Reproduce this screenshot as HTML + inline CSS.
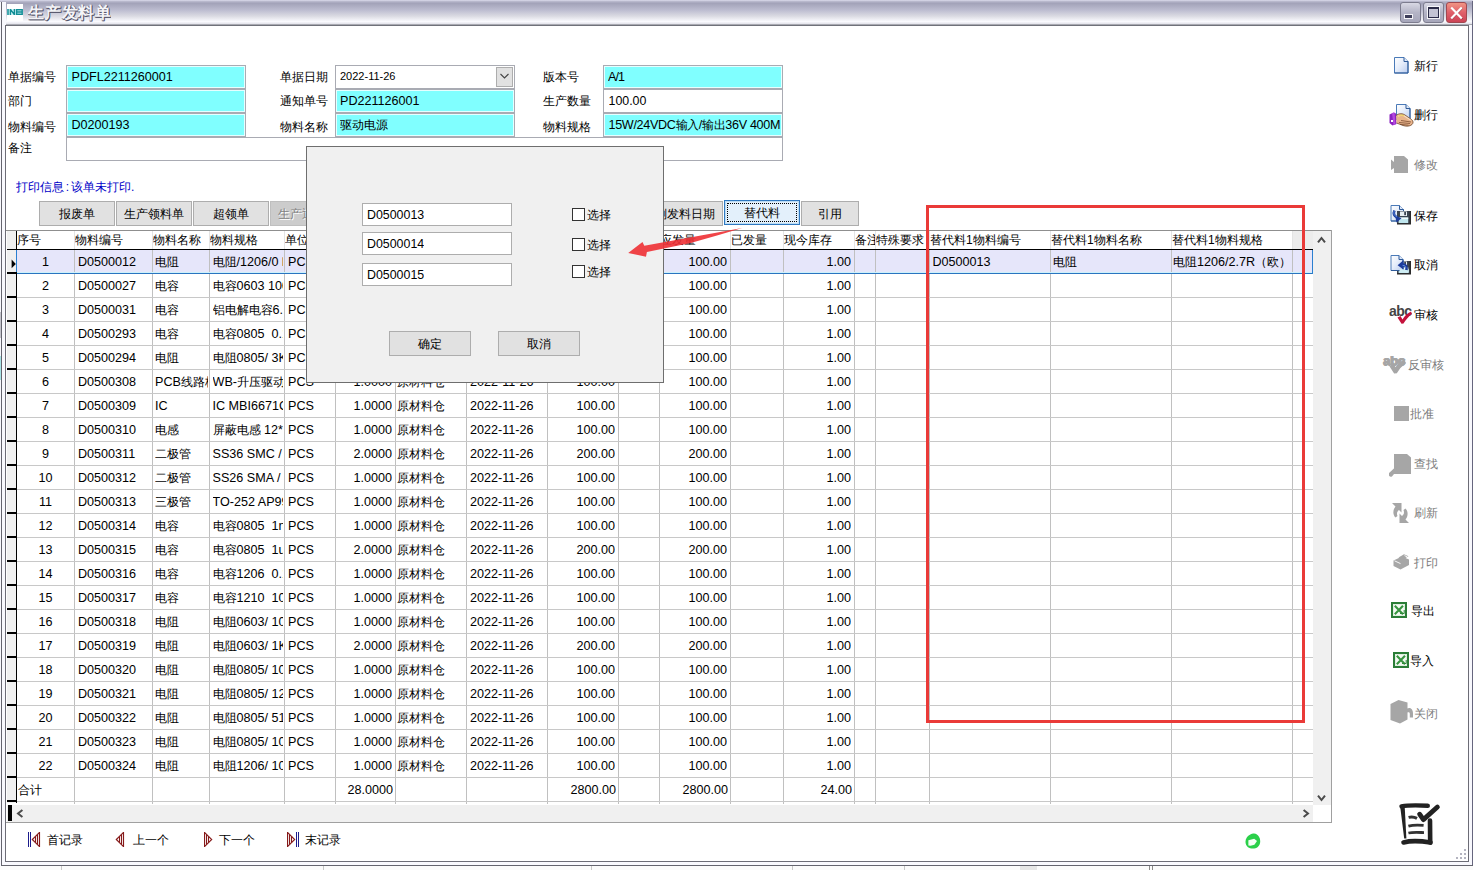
<!DOCTYPE html><html><head><meta charset="utf-8"><title>生产发料单</title><style>
*{box-sizing:border-box;margin:0;padding:0}
html,body{width:1473px;height:870px;overflow:hidden;background:#fff}
body{position:relative;font-family:"Liberation Sans",sans-serif;font-size:12.4px;color:#000;line-height:1}
.a{position:absolute}
.t{position:absolute;white-space:nowrap;overflow:hidden}
.lbl{position:absolute;font-size:12px;height:16px;line-height:16px;white-space:nowrap}
.fld{position:absolute;border:1px solid #a9abb3;background:#fff;height:25px;box-shadow:inset 0 0 0 1px #fff}
.fld.c{background:#80ffff;box-shadow:inset 0 0 0 1px #e6ffff}
.fld span{position:absolute;left:4.5px;top:0;height:22px;line-height:22px;white-space:nowrap;overflow:hidden;right:2px}
.btn{position:absolute;height:25px;top:201px;background:#e1e1e1;border:1px solid #adadad;text-align:center;font-size:12px;line-height:25px;white-space:nowrap;overflow:hidden}
.vl{position:absolute;width:1px;background:#c0c0c0;top:250px;height:554px}
.hl{position:absolute;height:1px;background:#c8c8c8;left:17px;width:1296px}
.tick{position:absolute;left:7px;width:10px;height:2px;background:#000}
.c{position:absolute;height:23px;line-height:25px;font-size:12.6px;white-space:pre;overflow:hidden}
.r{text-align:right}
.c i,.fld i{font-style:normal;font-size:12px}
b{display:inline-block;width:1em;text-align:center;font-weight:inherit}
.ti b{width:16.7px}
.pi b{width:12px}
.pi s{display:inline-block;width:7px;text-align:center;text-decoration:none}
.fld .nz b{width:11.67px}
.h{position:absolute;top:233px;height:15px;line-height:15px;font-size:12px;white-space:nowrap;overflow:hidden}
.tb{position:absolute;font-size:12px;height:16px;line-height:16px;white-space:nowrap}
.tb.d{color:#7d7d7d}
.nav{position:absolute;font-size:12px;top:832px;height:16px;line-height:16px;white-space:nowrap}
</style></head><body>
<div class="a" style="left:0;top:0;width:1473px;height:26px;background:linear-gradient(to bottom,#dddded 0px,#b8b8cc 1.5px,#a2a2b8 3.2px,#bcbcd0 10px,#dadae2 16px,#fafafe 21.5px,#e2e2ea 24px,#70727a 25px,#70727a 26px)"></div>
<div class="a" style="left:0;top:2px;width:6px;height:864px;background:#f8f8fd"></div>
<div class="a" style="left:1px;top:2px;width:1px;height:864px;background:#64646e"></div>
<div class="a" style="left:5px;top:25px;width:1px;height:837px;background:#6c6c76"></div>
<div class="a" style="left:1468px;top:25px;width:5px;height:841px;background:#f8f8fd"></div>
<div class="a" style="left:1468px;top:25px;width:1px;height:837px;background:#6c6c76"></div>
<div class="a" style="left:1472px;top:1px;width:1px;height:865px;background:#66667e"></div>
<div class="a" style="left:2px;top:861px;width:1470px;height:5px;background:#f8f8fd"></div>
<div class="a" style="left:5px;top:861px;width:1464px;height:1px;background:#6c6c76"></div>
<div class="a" style="left:1px;top:865px;width:1472px;height:1px;background:#64646e"></div>
<div class="a" style="left:0;top:866px;width:1473px;height:4px;background:#fbfbfb"></div>
<div class="a" style="left:61px;top:866px;width:1px;height:4px;background:#c8c8c8"></div>
<div class="a" style="left:591px;top:866px;width:1px;height:4px;background:#c8c8c8"></div>
<div class="a" style="left:792px;top:866px;width:1px;height:4px;background:#c8c8c8"></div>
<div class="a" style="left:904px;top:866px;width:1px;height:4px;background:#c8c8c8"></div>
<div class="a" style="left:1020px;top:866px;width:17px;height:4px;background:#e6e6e6"></div>
<div class="a" style="left:323px;top:866px;width:1px;height:4px;background:#c8c8c8"></div>
<div class="a" style="left:1149px;top:866px;width:1px;height:4px;background:#8a8a8a"></div><div class="a" style="left:1152px;top:866px;width:1px;height:4px;background:#8a8a8a"></div>
<div class="a" style="left:0;top:356px;width:1px;height:24px;background:#a8e4e6"></div>
<div class="a" style="left:0;top:312px;width:1px;height:26px;background:#c4c4cc"></div>
<div class="a" style="left:7px;top:4px;width:16px;height:17px;background:#fff"></div>
<svg class="a" style="left:7px;top:9px" width="16" height="6" viewBox="0 0 16 6"><rect x="0" y="0" width="16" height="6" fill="#d4f7f8"/><path d="M1 0v6M3.4 0v6M3.4 0.4L7.4 5.6M7.4 0v6" stroke="#128e96" stroke-width="1.5" fill="none"/><path d="M9.6 0.7h5.6v4.6h-5.6zM9.6 3h5.6" stroke="#128e96" stroke-width="1.4" fill="none"/></svg>
<div class="t ti" style="left:28px;top:3px;height:20px;line-height:20px;font-size:16px;font-weight:bold;color:#f4f4f8;text-shadow:1px 1px 0 #55556a,0 1px 0 #666678,1px 0 0 #77778a"><b>生</b><b>产</b><b>发</b><b>料</b><b>单</b></div>
<div class="a" style="left:1400px;top:2px;width:21px;height:21px;border:1px solid #7c7c8e;border-radius:3px;background:linear-gradient(#d8d8e4,#b4b4c6 50%,#a6a6ba)"></div>
<div class="a" style="left:1405px;top:15px;width:7px;height:3px;background:#3c3c58;box-shadow:0 0 0 1px rgba(255,255,255,.85)"></div>
<div class="a" style="left:1423px;top:2px;width:21px;height:21px;border:1px solid #7c7c8e;border-radius:3px;background:linear-gradient(#d8d8e4,#b4b4c6 50%,#a6a6ba)"></div>
<div class="a" style="left:1428px;top:7px;width:11px;height:11px;border:1px solid #2c2c48;border-top-width:2px;background:#c4c4d4;box-shadow:0 0 0 1px rgba(255,255,255,.85)"></div>
<div class="a" style="left:1446px;top:2px;width:21px;height:21px;border:1px solid #a04850;border-radius:3px;background:linear-gradient(#f09484,#e0606a 50%,#cc4456)"></div>
<svg class="a" style="left:1446px;top:3px" width="21" height="20" viewBox="0 0 21 20"><path d="M5.6 5L16.4 16M16.4 5L5.6 16" stroke="#5a1c24" stroke-width="1.6" fill="none" opacity="0.6"/><path d="M5.2 4.5L15.8 15.5M15.8 4.5L5.2 15.5" stroke="#fff" stroke-width="2.2" fill="none"/></svg>
<div class="lbl" style="left:8px;top:69px"><b>单</b><b>据</b><b>编</b><b>号</b></div>
<div class="lbl" style="left:8px;top:93px"><b>部</b><b>门</b></div>
<div class="lbl" style="left:8px;top:119px"><b>物</b><b>料</b><b>编</b><b>号</b></div>
<div class="lbl" style="left:8px;top:140px"><b>备</b><b>注</b></div>
<div class="lbl" style="left:280px;top:69px"><b>单</b><b>据</b><b>日</b><b>期</b></div>
<div class="lbl" style="left:280px;top:93px"><b>通</b><b>知</b><b>单</b><b>号</b></div>
<div class="lbl" style="left:280px;top:119px"><b>物</b><b>料</b><b>名</b><b>称</b></div>
<div class="lbl" style="left:543px;top:69px"><b>版</b><b>本</b><b>号</b></div>
<div class="lbl" style="left:543px;top:93px"><b>生</b><b>产</b><b>数</b><b>量</b></div>
<div class="lbl" style="left:543px;top:119px"><b>物</b><b>料</b><b>规</b><b>格</b></div>
<div class="fld" style="left:66px;top:137px;width:717px;height:24px"><span></span></div>
<div class="fld c" style="left:66px;top:65px;width:180px;height:24px"><span>PDFL2211260001</span></div>
<div class="fld c" style="left:66px;top:89px;width:180px;height:24px"><span></span></div>
<div class="fld c" style="left:66px;top:113px;width:180px;height:24px"><span>D0200193</span></div>
<div class="fld" style="left:335px;top:65px;width:180px;height:24px"><span style="font-size:11px;left:4px;top:-1px">2022-11-26</span></div>
<div class="fld c" style="left:335px;top:89px;width:180px;height:24px"><span style="left:4px">PD221126001</span></div>
<div class="fld c" style="left:335px;top:113px;width:180px;height:24px"><span style="left:4px"><i><b>驱</b><b>动</b><b>电</b><b>源</b></i></span></div>
<div class="fld c" style="left:603px;top:65px;width:180px;height:24px"><span style="left:4px;letter-spacing:-1px">A/1</span></div>
<div class="fld" style="left:603px;top:89px;width:180px;height:24px"><span>100.00</span></div>
<div class="fld c" style="left:603px;top:113px;width:180px;height:24px"><span style="letter-spacing:-0.33px;right:0">15W/24VDC<i class="nz"><b>输</b><b>入</b></i>/<i class="nz"><b>输</b><b>出</b></i>36V 400M</span></div>
<div class="a" style="left:496px;top:67px;width:17px;height:20px;background:#e1e1e1;border:1px solid #adadad"></div>
<svg class="a" style="left:499px;top:72px" width="11" height="8" viewBox="0 0 11 8"><path d="M1.5 2L5.5 6L9.5 2" stroke="#444" stroke-width="1.1" fill="none"/></svg>
<div class="t pi" style="left:16px;top:179px;height:16px;line-height:16px;font-size:12px;color:#0000c8"><b>打</b><b>印</b><b>信</b><b>息</b><s>:</s><b>该</b><b>单</b><b>未</b><b>打</b><b>印</b><s style="width:6px;text-align:left">.</s></div>
<div class="btn" style="left:39px;width:76px;"><b>报</b><b>废</b><b>单</b></div>
<div class="btn" style="left:116px;width:76px;"><b>生</b><b>产</b><b>领</b><b>料</b><b>单</b></div>
<div class="btn" style="left:193px;width:76px;"><b>超</b><b>领</b><b>单</b></div>
<div class="btn" style="left:270px;width:76px;color:#838383;background:#cccccc;border-color:#bfbfbf;text-shadow:1px 1px 0 #fff"><b>生</b><b>产</b><b>退</b><b>料</b><b>单</b></div>
<div class="btn" style="left:647px;width:76px;"><b>倒</b><b>发</b><b>料</b><b>日</b><b>期</b></div>
<div class="btn" style="left:724px;width:76px;background:#e3f0fb;border-color:#2f78c0;top:200px;height:25px;line-height:25px;box-shadow:inset 0 0 0 1px #bcdcf4"><b>替</b><b>代</b><b>料</b></div>
<div class="a" style="left:727px;top:203px;width:70px;height:19px;border:1px dotted #000"></div>
<div class="btn" style="left:801px;width:58px;"><b>引</b><b>用</b></div>
<div class="a" style="left:6px;top:230px;width:1326px;height:1px;background:#8f8f8f"></div>
<div class="a" style="left:1331px;top:230px;width:1px;height:593px;background:#a0a0a0"></div>
<div class="a" style="left:6px;top:822px;width:1326px;height:1px;background:#a0a0a0"></div>
<div class="a" style="left:7px;top:231px;width:10px;height:572px;background:#f0f0f0"></div>
<div class="a" style="left:16px;top:231px;width:1px;height:572px;background:#000"></div>
<div class="a" style="left:1293px;top:231px;width:20px;height:18px;background:#ececec"></div>
<div class="a" style="left:17px;top:250px;width:1296px;height:23px;background:#e6e6fa"></div>
<div class="vl" style="left:74px"></div>
<div class="a" style="left:74px;top:231px;width:1px;height:18px;background:#e4e4e4"></div>
<div class="vl" style="left:152px"></div>
<div class="a" style="left:152px;top:231px;width:1px;height:18px;background:#e4e4e4"></div>
<div class="vl" style="left:209px"></div>
<div class="a" style="left:209px;top:231px;width:1px;height:18px;background:#e4e4e4"></div>
<div class="vl" style="left:284px"></div>
<div class="a" style="left:284px;top:231px;width:1px;height:18px;background:#e4e4e4"></div>
<div class="vl" style="left:335px"></div>
<div class="a" style="left:335px;top:231px;width:1px;height:18px;background:#e4e4e4"></div>
<div class="vl" style="left:395px"></div>
<div class="a" style="left:395px;top:231px;width:1px;height:18px;background:#e4e4e4"></div>
<div class="vl" style="left:466px"></div>
<div class="a" style="left:466px;top:231px;width:1px;height:18px;background:#e4e4e4"></div>
<div class="vl" style="left:547px"></div>
<div class="a" style="left:547px;top:231px;width:1px;height:18px;background:#e4e4e4"></div>
<div class="vl" style="left:618px"></div>
<div class="a" style="left:618px;top:231px;width:1px;height:18px;background:#e4e4e4"></div>
<div class="vl" style="left:659px"></div>
<div class="a" style="left:659px;top:231px;width:1px;height:18px;background:#e4e4e4"></div>
<div class="vl" style="left:730px"></div>
<div class="a" style="left:730px;top:231px;width:1px;height:18px;background:#e4e4e4"></div>
<div class="vl" style="left:783px"></div>
<div class="a" style="left:783px;top:231px;width:1px;height:18px;background:#e4e4e4"></div>
<div class="vl" style="left:854px"></div>
<div class="a" style="left:854px;top:231px;width:1px;height:18px;background:#e4e4e4"></div>
<div class="vl" style="left:875px"></div>
<div class="a" style="left:875px;top:231px;width:1px;height:18px;background:#e4e4e4"></div>
<div class="vl" style="left:929px"></div>
<div class="a" style="left:929px;top:231px;width:1px;height:18px;background:#e4e4e4"></div>
<div class="vl" style="left:1050px"></div>
<div class="a" style="left:1050px;top:231px;width:1px;height:18px;background:#e4e4e4"></div>
<div class="vl" style="left:1171px"></div>
<div class="a" style="left:1171px;top:231px;width:1px;height:18px;background:#e4e4e4"></div>
<div class="vl" style="left:1292px"></div>
<div class="a" style="left:1292px;top:231px;width:1px;height:18px;background:#e4e4e4"></div>
<div class="hl" style="top:273px"></div>
<div class="hl" style="top:297px"></div>
<div class="hl" style="top:321px"></div>
<div class="hl" style="top:345px"></div>
<div class="hl" style="top:369px"></div>
<div class="hl" style="top:393px"></div>
<div class="hl" style="top:417px"></div>
<div class="hl" style="top:441px"></div>
<div class="hl" style="top:465px"></div>
<div class="hl" style="top:489px"></div>
<div class="hl" style="top:513px"></div>
<div class="hl" style="top:537px"></div>
<div class="hl" style="top:561px"></div>
<div class="hl" style="top:585px"></div>
<div class="hl" style="top:609px"></div>
<div class="hl" style="top:633px"></div>
<div class="hl" style="top:657px"></div>
<div class="hl" style="top:681px"></div>
<div class="hl" style="top:705px"></div>
<div class="hl" style="top:729px"></div>
<div class="hl" style="top:753px"></div>
<div class="hl" style="top:777px"></div>
<div class="hl" style="top:801px"></div>
<div class="a" style="left:7px;top:249px;width:1306px;height:1px;background:#000"></div>
<div class="a" style="left:17px;top:272px;width:1296px;height:1px;background:#cdf1fb"></div>
<div class="a" style="left:17px;top:273px;width:1296px;height:1px;background:#2a74c0"></div>
<div class="a" style="left:1312px;top:250px;width:1px;height:24px;background:#2a7fd0"></div>
<div class="a" style="left:16px;top:250px;width:1px;height:24px;background:#2a7fd0"></div>
<div class="tick" style="top:272px"></div>
<div class="tick" style="top:296px"></div>
<div class="tick" style="top:320px"></div>
<div class="tick" style="top:344px"></div>
<div class="tick" style="top:368px"></div>
<div class="tick" style="top:392px"></div>
<div class="tick" style="top:416px"></div>
<div class="tick" style="top:440px"></div>
<div class="tick" style="top:464px"></div>
<div class="tick" style="top:488px"></div>
<div class="tick" style="top:512px"></div>
<div class="tick" style="top:536px"></div>
<div class="tick" style="top:560px"></div>
<div class="tick" style="top:584px"></div>
<div class="tick" style="top:608px"></div>
<div class="tick" style="top:632px"></div>
<div class="tick" style="top:656px"></div>
<div class="tick" style="top:680px"></div>
<div class="tick" style="top:704px"></div>
<div class="tick" style="top:728px"></div>
<div class="tick" style="top:752px"></div>
<div class="tick" style="top:776px"></div>
<div class="tick" style="top:800px"></div>
<svg class="a" style="left:11px;top:259px" width="5" height="10" viewBox="0 0 5 10"><path d="M0.6 0.6L4.8 4.9L0.6 9.2z" fill="#000"/></svg>
<div class="h" style="left:17px;width:57px"><b>序</b><b>号</b></div>
<div class="h" style="left:75px;width:77px"><b>物</b><b>料</b><b>编</b><b>号</b></div>
<div class="h" style="left:153px;width:56px"><b>物</b><b>料</b><b>名</b><b>称</b></div>
<div class="h" style="left:210px;width:74px"><b>物</b><b>料</b><b>规</b><b>格</b></div>
<div class="h" style="left:285px;width:50px"><b>单</b><b>位</b></div>
<div class="h" style="left:660px;width:70px"><b>应</b><b>发</b><b>量</b></div>
<div class="h" style="left:731px;width:52px"><b>已</b><b>发</b><b>量</b></div>
<div class="h" style="left:784px;width:70px"><b>现</b><b>今</b><b>库</b><b>存</b></div>
<div class="h" style="left:855px;width:20px"><b>备</b><b>注</b></div>
<div class="h" style="left:876px;width:53px"><b>特</b><b>殊</b><b>要</b><b>求</b></div>
<div class="h" style="left:930px;width:120px"><b>替</b><b>代</b><b>料</b>1<b>物</b><b>料</b><b>编</b><b>号</b></div>
<div class="h" style="left:1051px;width:120px"><b>替</b><b>代</b><b>料</b>1<b>物</b><b>料</b><b>名</b><b>称</b></div>
<div class="h" style="left:1172px;width:120px"><b>替</b><b>代</b><b>料</b>1<b>物</b><b>料</b><b>规</b><b>格</b></div>
<div class="c" style="left:17px;top:250px;width:57px;text-align:center">1</div>
<div class="c" style="left:78px;top:250px;width:73px">D0500012</div>
<div class="c" style="left:155px;top:250px;width:53px"><i><b>电</b><b>阻</b></i></div>
<div class="c" style="left:212.5px;top:250px;width:70.5px"><i><b>电</b><b>阻</b></i>/1206/0 <i><b>欧</b></i></div>
<div class="c" style="left:288px;top:250px;width:46px">PCS</div>
<div class="c r" style="left:336px;top:250px;width:56px">1.0000</div>
<div class="c" style="left:397px;top:250px;width:68px"><i><b>原</b><b>材</b><b>料</b><b>仓</b></i></div>
<div class="c" style="left:470px;top:250px;width:76px">2022-11-26</div>
<div class="c r" style="left:548px;top:250px;width:67px">100.00</div>
<div class="c r" style="left:660px;top:250px;width:67px">100.00</div>
<div class="c r" style="left:784px;top:250px;width:67px">1.00</div>
<div class="c" style="left:17px;top:274px;width:57px;text-align:center">2</div>
<div class="c" style="left:78px;top:274px;width:73px">D0500027</div>
<div class="c" style="left:155px;top:274px;width:53px"><i><b>电</b><b>容</b></i></div>
<div class="c" style="left:212.5px;top:274px;width:70.5px"><i><b>电</b><b>容</b></i>0603 10000</div>
<div class="c" style="left:288px;top:274px;width:46px">PCS</div>
<div class="c r" style="left:336px;top:274px;width:56px">1.0000</div>
<div class="c" style="left:397px;top:274px;width:68px"><i><b>原</b><b>材</b><b>料</b><b>仓</b></i></div>
<div class="c" style="left:470px;top:274px;width:76px">2022-11-26</div>
<div class="c r" style="left:548px;top:274px;width:67px">100.00</div>
<div class="c r" style="left:660px;top:274px;width:67px">100.00</div>
<div class="c r" style="left:784px;top:274px;width:67px">1.00</div>
<div class="c" style="left:17px;top:298px;width:57px;text-align:center">3</div>
<div class="c" style="left:78px;top:298px;width:73px">D0500031</div>
<div class="c" style="left:155px;top:298px;width:53px"><i><b>电</b><b>容</b></i></div>
<div class="c" style="left:212.5px;top:298px;width:70.5px"><i><b>铝</b><b>电</b><b>解</b><b>电</b><b>容</b></i>6.3</div>
<div class="c" style="left:288px;top:298px;width:46px">PCS</div>
<div class="c r" style="left:336px;top:298px;width:56px">1.0000</div>
<div class="c" style="left:397px;top:298px;width:68px"><i><b>原</b><b>材</b><b>料</b><b>仓</b></i></div>
<div class="c" style="left:470px;top:298px;width:76px">2022-11-26</div>
<div class="c r" style="left:548px;top:298px;width:67px">100.00</div>
<div class="c r" style="left:660px;top:298px;width:67px">100.00</div>
<div class="c r" style="left:784px;top:298px;width:67px">1.00</div>
<div class="c" style="left:17px;top:322px;width:57px;text-align:center">4</div>
<div class="c" style="left:78px;top:322px;width:73px">D0500293</div>
<div class="c" style="left:155px;top:322px;width:53px"><i><b>电</b><b>容</b></i></div>
<div class="c" style="left:212.5px;top:322px;width:70.5px"><i><b>电</b><b>容</b></i>0805  0.1u</div>
<div class="c" style="left:288px;top:322px;width:46px">PCS</div>
<div class="c r" style="left:336px;top:322px;width:56px">1.0000</div>
<div class="c" style="left:397px;top:322px;width:68px"><i><b>原</b><b>材</b><b>料</b><b>仓</b></i></div>
<div class="c" style="left:470px;top:322px;width:76px">2022-11-26</div>
<div class="c r" style="left:548px;top:322px;width:67px">100.00</div>
<div class="c r" style="left:660px;top:322px;width:67px">100.00</div>
<div class="c r" style="left:784px;top:322px;width:67px">1.00</div>
<div class="c" style="left:17px;top:346px;width:57px;text-align:center">5</div>
<div class="c" style="left:78px;top:346px;width:73px">D0500294</div>
<div class="c" style="left:155px;top:346px;width:53px"><i><b>电</b><b>阻</b></i></div>
<div class="c" style="left:212.5px;top:346px;width:70.5px"><i><b>电</b><b>阻</b></i>0805/ 3K</div>
<div class="c" style="left:288px;top:346px;width:46px">PCS</div>
<div class="c r" style="left:336px;top:346px;width:56px">1.0000</div>
<div class="c" style="left:397px;top:346px;width:68px"><i><b>原</b><b>材</b><b>料</b><b>仓</b></i></div>
<div class="c" style="left:470px;top:346px;width:76px">2022-11-26</div>
<div class="c r" style="left:548px;top:346px;width:67px">100.00</div>
<div class="c r" style="left:660px;top:346px;width:67px">100.00</div>
<div class="c r" style="left:784px;top:346px;width:67px">1.00</div>
<div class="c" style="left:17px;top:370px;width:57px;text-align:center">6</div>
<div class="c" style="left:78px;top:370px;width:73px">D0500308</div>
<div class="c" style="left:155px;top:370px;width:53px">PCB<i><b>线</b><b>路</b><b>板</b></i></div>
<div class="c" style="left:212.5px;top:370px;width:70.5px">WB-<i><b>升</b><b>压</b><b>驱</b><b>动</b><b>板</b></i></div>
<div class="c" style="left:288px;top:370px;width:46px">PCS</div>
<div class="c r" style="left:336px;top:370px;width:56px">1.0000</div>
<div class="c" style="left:397px;top:370px;width:68px"><i><b>原</b><b>材</b><b>料</b><b>仓</b></i></div>
<div class="c" style="left:470px;top:370px;width:76px">2022-11-26</div>
<div class="c r" style="left:548px;top:370px;width:67px">100.00</div>
<div class="c r" style="left:660px;top:370px;width:67px">100.00</div>
<div class="c r" style="left:784px;top:370px;width:67px">1.00</div>
<div class="c" style="left:17px;top:394px;width:57px;text-align:center">7</div>
<div class="c" style="left:78px;top:394px;width:73px">D0500309</div>
<div class="c" style="left:155px;top:394px;width:53px">IC</div>
<div class="c" style="left:212.5px;top:394px;width:70.5px">IC MBI6671GS</div>
<div class="c" style="left:288px;top:394px;width:46px">PCS</div>
<div class="c r" style="left:336px;top:394px;width:56px">1.0000</div>
<div class="c" style="left:397px;top:394px;width:68px"><i><b>原</b><b>材</b><b>料</b><b>仓</b></i></div>
<div class="c" style="left:470px;top:394px;width:76px">2022-11-26</div>
<div class="c r" style="left:548px;top:394px;width:67px">100.00</div>
<div class="c r" style="left:660px;top:394px;width:67px">100.00</div>
<div class="c r" style="left:784px;top:394px;width:67px">1.00</div>
<div class="c" style="left:17px;top:418px;width:57px;text-align:center">8</div>
<div class="c" style="left:78px;top:418px;width:73px">D0500310</div>
<div class="c" style="left:155px;top:418px;width:53px"><i><b>电</b><b>感</b></i></div>
<div class="c" style="left:212.5px;top:418px;width:70.5px"><i><b>屏</b><b>蔽</b><b>电</b><b>感</b></i> 12*1</div>
<div class="c" style="left:288px;top:418px;width:46px">PCS</div>
<div class="c r" style="left:336px;top:418px;width:56px">1.0000</div>
<div class="c" style="left:397px;top:418px;width:68px"><i><b>原</b><b>材</b><b>料</b><b>仓</b></i></div>
<div class="c" style="left:470px;top:418px;width:76px">2022-11-26</div>
<div class="c r" style="left:548px;top:418px;width:67px">100.00</div>
<div class="c r" style="left:660px;top:418px;width:67px">100.00</div>
<div class="c r" style="left:784px;top:418px;width:67px">1.00</div>
<div class="c" style="left:17px;top:442px;width:57px;text-align:center">9</div>
<div class="c" style="left:78px;top:442px;width:73px">D0500311</div>
<div class="c" style="left:155px;top:442px;width:53px"><i><b>二</b><b>极</b><b>管</b></i></div>
<div class="c" style="left:212.5px;top:442px;width:70.5px">SS36 SMC / 3A</div>
<div class="c" style="left:288px;top:442px;width:46px">PCS</div>
<div class="c r" style="left:336px;top:442px;width:56px">2.0000</div>
<div class="c" style="left:397px;top:442px;width:68px"><i><b>原</b><b>材</b><b>料</b><b>仓</b></i></div>
<div class="c" style="left:470px;top:442px;width:76px">2022-11-26</div>
<div class="c r" style="left:548px;top:442px;width:67px">200.00</div>
<div class="c r" style="left:660px;top:442px;width:67px">200.00</div>
<div class="c r" style="left:784px;top:442px;width:67px">1.00</div>
<div class="c" style="left:17px;top:466px;width:57px;text-align:center">10</div>
<div class="c" style="left:78px;top:466px;width:73px">D0500312</div>
<div class="c" style="left:155px;top:466px;width:53px"><i><b>二</b><b>极</b><b>管</b></i></div>
<div class="c" style="left:212.5px;top:466px;width:70.5px">SS26 SMA / 2A</div>
<div class="c" style="left:288px;top:466px;width:46px">PCS</div>
<div class="c r" style="left:336px;top:466px;width:56px">1.0000</div>
<div class="c" style="left:397px;top:466px;width:68px"><i><b>原</b><b>材</b><b>料</b><b>仓</b></i></div>
<div class="c" style="left:470px;top:466px;width:76px">2022-11-26</div>
<div class="c r" style="left:548px;top:466px;width:67px">100.00</div>
<div class="c r" style="left:660px;top:466px;width:67px">100.00</div>
<div class="c r" style="left:784px;top:466px;width:67px">1.00</div>
<div class="c" style="left:17px;top:490px;width:57px;text-align:center">11</div>
<div class="c" style="left:78px;top:490px;width:73px">D0500313</div>
<div class="c" style="left:155px;top:490px;width:53px"><i><b>三</b><b>极</b><b>管</b></i></div>
<div class="c" style="left:212.5px;top:490px;width:70.5px">TO-252 AP9997</div>
<div class="c" style="left:288px;top:490px;width:46px">PCS</div>
<div class="c r" style="left:336px;top:490px;width:56px">1.0000</div>
<div class="c" style="left:397px;top:490px;width:68px"><i><b>原</b><b>材</b><b>料</b><b>仓</b></i></div>
<div class="c" style="left:470px;top:490px;width:76px">2022-11-26</div>
<div class="c r" style="left:548px;top:490px;width:67px">100.00</div>
<div class="c r" style="left:660px;top:490px;width:67px">100.00</div>
<div class="c r" style="left:784px;top:490px;width:67px">1.00</div>
<div class="c" style="left:17px;top:514px;width:57px;text-align:center">12</div>
<div class="c" style="left:78px;top:514px;width:73px">D0500314</div>
<div class="c" style="left:155px;top:514px;width:53px"><i><b>电</b><b>容</b></i></div>
<div class="c" style="left:212.5px;top:514px;width:70.5px"><i><b>电</b><b>容</b></i>0805  1nF</div>
<div class="c" style="left:288px;top:514px;width:46px">PCS</div>
<div class="c r" style="left:336px;top:514px;width:56px">1.0000</div>
<div class="c" style="left:397px;top:514px;width:68px"><i><b>原</b><b>材</b><b>料</b><b>仓</b></i></div>
<div class="c" style="left:470px;top:514px;width:76px">2022-11-26</div>
<div class="c r" style="left:548px;top:514px;width:67px">100.00</div>
<div class="c r" style="left:660px;top:514px;width:67px">100.00</div>
<div class="c r" style="left:784px;top:514px;width:67px">1.00</div>
<div class="c" style="left:17px;top:538px;width:57px;text-align:center">13</div>
<div class="c" style="left:78px;top:538px;width:73px">D0500315</div>
<div class="c" style="left:155px;top:538px;width:53px"><i><b>电</b><b>容</b></i></div>
<div class="c" style="left:212.5px;top:538px;width:70.5px"><i><b>电</b><b>容</b></i>0805  1uF</div>
<div class="c" style="left:288px;top:538px;width:46px">PCS</div>
<div class="c r" style="left:336px;top:538px;width:56px">2.0000</div>
<div class="c" style="left:397px;top:538px;width:68px"><i><b>原</b><b>材</b><b>料</b><b>仓</b></i></div>
<div class="c" style="left:470px;top:538px;width:76px">2022-11-26</div>
<div class="c r" style="left:548px;top:538px;width:67px">200.00</div>
<div class="c r" style="left:660px;top:538px;width:67px">200.00</div>
<div class="c r" style="left:784px;top:538px;width:67px">1.00</div>
<div class="c" style="left:17px;top:562px;width:57px;text-align:center">14</div>
<div class="c" style="left:78px;top:562px;width:73px">D0500316</div>
<div class="c" style="left:155px;top:562px;width:53px"><i><b>电</b><b>容</b></i></div>
<div class="c" style="left:212.5px;top:562px;width:70.5px"><i><b>电</b><b>容</b></i>1206  0.1u</div>
<div class="c" style="left:288px;top:562px;width:46px">PCS</div>
<div class="c r" style="left:336px;top:562px;width:56px">1.0000</div>
<div class="c" style="left:397px;top:562px;width:68px"><i><b>原</b><b>材</b><b>料</b><b>仓</b></i></div>
<div class="c" style="left:470px;top:562px;width:76px">2022-11-26</div>
<div class="c r" style="left:548px;top:562px;width:67px">100.00</div>
<div class="c r" style="left:660px;top:562px;width:67px">100.00</div>
<div class="c r" style="left:784px;top:562px;width:67px">1.00</div>
<div class="c" style="left:17px;top:586px;width:57px;text-align:center">15</div>
<div class="c" style="left:78px;top:586px;width:73px">D0500317</div>
<div class="c" style="left:155px;top:586px;width:53px"><i><b>电</b><b>容</b></i></div>
<div class="c" style="left:212.5px;top:586px;width:70.5px"><i><b>电</b><b>容</b></i>1210  10uF</div>
<div class="c" style="left:288px;top:586px;width:46px">PCS</div>
<div class="c r" style="left:336px;top:586px;width:56px">1.0000</div>
<div class="c" style="left:397px;top:586px;width:68px"><i><b>原</b><b>材</b><b>料</b><b>仓</b></i></div>
<div class="c" style="left:470px;top:586px;width:76px">2022-11-26</div>
<div class="c r" style="left:548px;top:586px;width:67px">100.00</div>
<div class="c r" style="left:660px;top:586px;width:67px">100.00</div>
<div class="c r" style="left:784px;top:586px;width:67px">1.00</div>
<div class="c" style="left:17px;top:610px;width:57px;text-align:center">16</div>
<div class="c" style="left:78px;top:610px;width:73px">D0500318</div>
<div class="c" style="left:155px;top:610px;width:53px"><i><b>电</b><b>阻</b></i></div>
<div class="c" style="left:212.5px;top:610px;width:70.5px"><i><b>电</b><b>阻</b></i>0603/ 10K</div>
<div class="c" style="left:288px;top:610px;width:46px">PCS</div>
<div class="c r" style="left:336px;top:610px;width:56px">1.0000</div>
<div class="c" style="left:397px;top:610px;width:68px"><i><b>原</b><b>材</b><b>料</b><b>仓</b></i></div>
<div class="c" style="left:470px;top:610px;width:76px">2022-11-26</div>
<div class="c r" style="left:548px;top:610px;width:67px">100.00</div>
<div class="c r" style="left:660px;top:610px;width:67px">100.00</div>
<div class="c r" style="left:784px;top:610px;width:67px">1.00</div>
<div class="c" style="left:17px;top:634px;width:57px;text-align:center">17</div>
<div class="c" style="left:78px;top:634px;width:73px">D0500319</div>
<div class="c" style="left:155px;top:634px;width:53px"><i><b>电</b><b>阻</b></i></div>
<div class="c" style="left:212.5px;top:634px;width:70.5px"><i><b>电</b><b>阻</b></i>0603/ 1K</div>
<div class="c" style="left:288px;top:634px;width:46px">PCS</div>
<div class="c r" style="left:336px;top:634px;width:56px">2.0000</div>
<div class="c" style="left:397px;top:634px;width:68px"><i><b>原</b><b>材</b><b>料</b><b>仓</b></i></div>
<div class="c" style="left:470px;top:634px;width:76px">2022-11-26</div>
<div class="c r" style="left:548px;top:634px;width:67px">200.00</div>
<div class="c r" style="left:660px;top:634px;width:67px">200.00</div>
<div class="c r" style="left:784px;top:634px;width:67px">1.00</div>
<div class="c" style="left:17px;top:658px;width:57px;text-align:center">18</div>
<div class="c" style="left:78px;top:658px;width:73px">D0500320</div>
<div class="c" style="left:155px;top:658px;width:53px"><i><b>电</b><b>阻</b></i></div>
<div class="c" style="left:212.5px;top:658px;width:70.5px"><i><b>电</b><b>阻</b></i>0805/ 10R</div>
<div class="c" style="left:288px;top:658px;width:46px">PCS</div>
<div class="c r" style="left:336px;top:658px;width:56px">1.0000</div>
<div class="c" style="left:397px;top:658px;width:68px"><i><b>原</b><b>材</b><b>料</b><b>仓</b></i></div>
<div class="c" style="left:470px;top:658px;width:76px">2022-11-26</div>
<div class="c r" style="left:548px;top:658px;width:67px">100.00</div>
<div class="c r" style="left:660px;top:658px;width:67px">100.00</div>
<div class="c r" style="left:784px;top:658px;width:67px">1.00</div>
<div class="c" style="left:17px;top:682px;width:57px;text-align:center">19</div>
<div class="c" style="left:78px;top:682px;width:73px">D0500321</div>
<div class="c" style="left:155px;top:682px;width:53px"><i><b>电</b><b>阻</b></i></div>
<div class="c" style="left:212.5px;top:682px;width:70.5px"><i><b>电</b><b>阻</b></i>0805/ 12K</div>
<div class="c" style="left:288px;top:682px;width:46px">PCS</div>
<div class="c r" style="left:336px;top:682px;width:56px">1.0000</div>
<div class="c" style="left:397px;top:682px;width:68px"><i><b>原</b><b>材</b><b>料</b><b>仓</b></i></div>
<div class="c" style="left:470px;top:682px;width:76px">2022-11-26</div>
<div class="c r" style="left:548px;top:682px;width:67px">100.00</div>
<div class="c r" style="left:660px;top:682px;width:67px">100.00</div>
<div class="c r" style="left:784px;top:682px;width:67px">1.00</div>
<div class="c" style="left:17px;top:706px;width:57px;text-align:center">20</div>
<div class="c" style="left:78px;top:706px;width:73px">D0500322</div>
<div class="c" style="left:155px;top:706px;width:53px"><i><b>电</b><b>阻</b></i></div>
<div class="c" style="left:212.5px;top:706px;width:70.5px"><i><b>电</b><b>阻</b></i>0805/ 51K</div>
<div class="c" style="left:288px;top:706px;width:46px">PCS</div>
<div class="c r" style="left:336px;top:706px;width:56px">1.0000</div>
<div class="c" style="left:397px;top:706px;width:68px"><i><b>原</b><b>材</b><b>料</b><b>仓</b></i></div>
<div class="c" style="left:470px;top:706px;width:76px">2022-11-26</div>
<div class="c r" style="left:548px;top:706px;width:67px">100.00</div>
<div class="c r" style="left:660px;top:706px;width:67px">100.00</div>
<div class="c r" style="left:784px;top:706px;width:67px">1.00</div>
<div class="c" style="left:17px;top:730px;width:57px;text-align:center">21</div>
<div class="c" style="left:78px;top:730px;width:73px">D0500323</div>
<div class="c" style="left:155px;top:730px;width:53px"><i><b>电</b><b>阻</b></i></div>
<div class="c" style="left:212.5px;top:730px;width:70.5px"><i><b>电</b><b>阻</b></i>0805/ 100</div>
<div class="c" style="left:288px;top:730px;width:46px">PCS</div>
<div class="c r" style="left:336px;top:730px;width:56px">1.0000</div>
<div class="c" style="left:397px;top:730px;width:68px"><i><b>原</b><b>材</b><b>料</b><b>仓</b></i></div>
<div class="c" style="left:470px;top:730px;width:76px">2022-11-26</div>
<div class="c r" style="left:548px;top:730px;width:67px">100.00</div>
<div class="c r" style="left:660px;top:730px;width:67px">100.00</div>
<div class="c r" style="left:784px;top:730px;width:67px">1.00</div>
<div class="c" style="left:17px;top:754px;width:57px;text-align:center">22</div>
<div class="c" style="left:78px;top:754px;width:73px">D0500324</div>
<div class="c" style="left:155px;top:754px;width:53px"><i><b>电</b><b>阻</b></i></div>
<div class="c" style="left:212.5px;top:754px;width:70.5px"><i><b>电</b><b>阻</b></i>1206/ 10R</div>
<div class="c" style="left:288px;top:754px;width:46px">PCS</div>
<div class="c r" style="left:336px;top:754px;width:56px">1.0000</div>
<div class="c" style="left:397px;top:754px;width:68px"><i><b>原</b><b>材</b><b>料</b><b>仓</b></i></div>
<div class="c" style="left:470px;top:754px;width:76px">2022-11-26</div>
<div class="c r" style="left:548px;top:754px;width:67px">100.00</div>
<div class="c r" style="left:660px;top:754px;width:67px">100.00</div>
<div class="c r" style="left:784px;top:754px;width:67px">1.00</div>
<div class="c" style="left:932.5px;top:250px;width:116.5px">D0500013</div>
<div class="c" style="left:1053px;top:250px;width:117px"><i><b>电</b><b>阻</b></i></div>
<div class="c" style="left:1173px;top:250px;width:118px"><i><b>电</b><b>阻</b></i>1206/2.7R<i><b>（</b><b>欧</b><b>）</b></i></div>
<div class="c" style="left:18px;top:778px;width:50px;font-size:12px"><b>合</b><b>计</b></div>
<div class="c r" style="left:336px;top:778px;width:57px">28.0000</div>
<div class="c r" style="left:548px;top:778px;width:68px">2800.00</div>
<div class="c r" style="left:660px;top:778px;width:68px">2800.00</div>
<div class="c r" style="left:784px;top:778px;width:68px">24.00</div>
<div class="a" style="left:7px;top:805px;width:1306px;height:17px;background:#f0f0f0"></div>
<div class="a" style="left:8px;top:805px;width:4px;height:16px;background:#000"></div>
<svg class="a" style="left:16px;top:809px" width="8" height="9" viewBox="0 0 8 9"><path d="M6.4 0.9L2 4.5L6.4 8.1" stroke="#4a4a4a" stroke-width="2" fill="none"/></svg>
<svg class="a" style="left:1302px;top:809px" width="8" height="9" viewBox="0 0 8 9"><path d="M1.6 0.9L6 4.5L1.6 8.1" stroke="#4a4a4a" stroke-width="2" fill="none"/></svg>
<div class="a" style="left:1313px;top:231px;width:18px;height:574px;background:#f0f0f0"></div>
<svg class="a" style="left:1317px;top:236px" width="9" height="8" viewBox="0 0 9 8"><path d="M1 6.4L4.5 2L8 6.4" stroke="#4a4a4a" stroke-width="2" fill="none"/></svg>
<svg class="a" style="left:1317px;top:794px" width="9" height="8" viewBox="0 0 9 8"><path d="M1 1.6L4.5 6L8 1.6" stroke="#4a4a4a" stroke-width="2" fill="none"/></svg>
<svg class="a" style="left:27px;top:832px" width="14" height="15" viewBox="0 0 14 15"><path d="M1.5 0v15M3.5 0v15" stroke="#1c1c8c" stroke-width="1"/><path d="M12.5 0.4L5.3 7.5L12.5 14.6z" stroke="#861a1a" stroke-width="1.15" fill="none"/><path d="M10.5 2.6v9.8M8.5 4.6v5.8" stroke="#861a1a" stroke-width="1.1"/></svg>
<div class="nav" style="left:47px"><b>首</b><b>记</b><b>录</b></div>
<svg class="a" style="left:115px;top:832px" width="14" height="15" viewBox="0 0 14 15"><path d="M8.5 0.4L1.3 7.5L8.5 14.6z" stroke="#861a1a" stroke-width="1.15" fill="none"/><path d="M6.5 2.6v9.8M4.5 4.6v5.8" stroke="#861a1a" stroke-width="1.1"/></svg>
<div class="nav" style="left:133px"><b>上</b><b>一</b><b>个</b></div>
<svg class="a" style="left:204px;top:832px" width="14" height="15" viewBox="0 0 14 15"><path d="M0.5 0.4L7.7 7.5L0.5 14.6z" stroke="#861a1a" stroke-width="1.15" fill="none"/><path d="M2.5 2.6v9.8M4.5 4.6v5.8" stroke="#861a1a" stroke-width="1.1"/></svg>
<div class="nav" style="left:219px"><b>下</b><b>一</b><b>个</b></div>
<svg class="a" style="left:287px;top:832px" width="14" height="15" viewBox="0 0 14 15"><path d="M0.5 0.4L7.7 7.5L0.5 14.6z" stroke="#861a1a" stroke-width="1.15" fill="none"/><path d="M2.5 2.6v9.8M4.5 4.6v5.8" stroke="#861a1a" stroke-width="1.1"/><path d="M9.5 0v15M11.5 0v15" stroke="#1c1c8c" stroke-width="1"/></svg>
<div class="nav" style="left:305px"><b>末</b><b>记</b><b>录</b></div>
<svg width="0" height="0" style="position:absolute"><defs><linearGradient id="pg" x1="0" y1="0" x2="1" y2="1"><stop offset="0" stop-color="#ffffff"/><stop offset="0.5" stop-color="#e4ecfa"/><stop offset="1" stop-color="#b9cbee"/></linearGradient></defs></svg>
<svg class="a" style="left:1394px;top:57px" width="15" height="17" viewBox="0 0 15 17"><path d="M0.5 0.5H10.0L14.0 4.5V16.0H0.5z" fill="url(#pg)" stroke="#4a7ab8" stroke-width="1"/><path d="M10.0 0.5V4.5H14.0" fill="#dfe8f8" stroke="#2e5a98" stroke-width="1"/><path d="M14.0 4.5V16.0H0.5" fill="none" stroke="#2e5a98" stroke-width="1"/></svg>
<div class="tb" style="left:1414px;top:58px"><b>新</b><b>行</b></div>
<svg class="a" style="left:1389px;top:104px" width="25" height="23" viewBox="0 0 25 23"><path d="M7.5 0.5H17.0L21.0 4.5V15.5H7.5z" fill="url(#pg)" stroke="#4a7ab8" stroke-width="1"/><path d="M17.0 0.5V4.5H21.0" fill="#dfe8f8" stroke="#2e5a98" stroke-width="1"/><path d="M21.0 4.5V15.5H7.5" fill="none" stroke="#2e5a98" stroke-width="1"/><path d="M0.5 10.5L4.5 8.5L7 9.5L7.5 20L3.5 21.5L0.5 19z" fill="#8a22c0"/><path d="M3 9.2L5.5 8.6L6.5 20.4L4.5 21z" fill="#b44be0"/><rect x="2" y="16" width="2" height="2" fill="#fff"/><path d="M7 11.5C10 9 14 9.5 16 11L22.5 15.5C24.5 17 24.5 19 23 20.5C21 22.5 17 22.5 14 21.5L7.5 19z" fill="#e8b48c"/><path d="M9 12C12 10.5 14.5 11 16 12L22 16" stroke="#f8dcc0" stroke-width="1.6" fill="none"/><path d="M9.5 11.8C11.5 10.6 13.5 10.8 15 11.8" stroke="#efd36a" stroke-width="1.5" fill="none"/><path d="M10 18.5L21 19.5M11 20.3L19.5 21.2M12 16.5L22 18" stroke="#8a5a3c" stroke-width="0.9" fill="none"/><path d="M7 11.5C10 9 14 9.5 16 11L22.5 15.5C24.5 17 24.5 19 23 20.5C21 22.5 17 22.5 14 21.5L7.5 19" stroke="#70482c" stroke-width="0.8" fill="none"/></svg>
<div class="tb" style="left:1414px;top:107px"><b>删</b><b>行</b></div>
<svg class="a" style="left:1391px;top:156px" width="17" height="17" viewBox="0 0 17 17"><path d="M3 0H13L17 3.5V17H3z M0 3.5L3 6V12L0 14z" fill="#a6a6a6"/></svg>
<div class="tb d" style="left:1414px;top:157px"><b>修</b><b>改</b></div>
<svg class="a" style="left:1390px;top:205px" width="22" height="20" viewBox="0 0 22 20"><path d="M1.0 0.5H9.5L13.5 4.5V16.0H1.0z" fill="url(#pg)" stroke="#4a7ab8" stroke-width="1"/><path d="M9.5 0.5V4.5H13.5" fill="#dfe8f8" stroke="#2e5a98" stroke-width="1"/><path d="M13.5 4.5V16.0H1.0" fill="none" stroke="#2e5a98" stroke-width="1"/><rect x="7" y="6" width="14" height="13.5" fill="#2a2a2a"/><rect x="7" y="6" width="12.6" height="12.2" fill="#3c4450"/><rect x="10" y="6.5" width="7" height="4.5" fill="#e8eef2"/><rect x="14.2" y="7" width="1.8" height="3.2" fill="#3c4450"/><rect x="8.6" y="12.5" width="9.6" height="5.5" fill="#bfe6ee"/><rect x="8.6" y="12.5" width="9.6" height="1.6" fill="#f2fbfd"/><path d="M4.5 5.5C3 8.5 4 11.5 7.5 12.5" stroke="#1c3c9c" stroke-width="2.6" fill="none"/><path d="M5 10.2L11.5 13.2L6.5 17.5z" fill="#1c3c9c"/><path d="M4.2 6C3.2 8.5 4.2 10.8 7 11.8" stroke="#5c8ce0" stroke-width="0.9" fill="none"/></svg>
<div class="tb" style="left:1414px;top:208px"><b>保</b><b>存</b></div>
<svg class="a" style="left:1390px;top:255px" width="22" height="20" viewBox="0 0 22 20"><rect x="7" y="6" width="14" height="13.5" fill="#2a2a2a"/><rect x="7" y="6" width="12.6" height="12.2" fill="#3c4450"/><rect x="10" y="6.5" width="7" height="4.5" fill="#e8eef2"/><rect x="14.2" y="7" width="1.8" height="3.2" fill="#3c4450"/><rect x="8.6" y="12.5" width="9.6" height="5.5" fill="#bfe6ee"/><rect x="8.6" y="12.5" width="9.6" height="1.6" fill="#f2fbfd"/><path d="M1.0 0.5H9.0L13.0 4.5V15.5H1.0z" fill="url(#pg)" stroke="#4a7ab8" stroke-width="1"/><path d="M9.0 0.5V4.5H13.0" fill="#dfe8f8" stroke="#2e5a98" stroke-width="1"/><path d="M13.0 4.5V15.5H1.0" fill="none" stroke="#2e5a98" stroke-width="1"/><rect x="9.5" y="14.2" width="9.4" height="3.6" fill="#cfeef4"/><path d="M16.4 15C17.2 11.6 15.4 9.4 12.4 9.8" stroke="#1c3c9c" stroke-width="2.8" fill="none"/><path d="M13.4 5.2L7.6 10.2L13.4 14.4z" fill="#1c3c9c"/><path d="M15.6 13.6C16 11.6 14.8 10.2 12.6 10.4" stroke="#6a98e8" stroke-width="0.9" fill="none"/></svg>
<div class="tb" style="left:1414px;top:257px"><b>取</b><b>消</b></div>
<div class="a" style="left:1389px;top:304px;width:26px;height:15px;line-height:15px;font-size:14px;font-weight:bold;color:#444;letter-spacing:-0.5px;white-space:nowrap">abc</div>
<svg class="a" style="left:1396px;top:311px" width="18" height="14" viewBox="0 0 18 14"><path d="M1.5 6.5L4.5 5L6.5 8.5C8.5 5 11.5 2 15 0.5L16 3C12.5 5.5 9.5 9 7.5 12.5L5.5 12.8z" fill="#c4123c"/></svg>
<div class="tb" style="left:1414px;top:307px"><b>审</b><b>核</b></div>
<div class="a" style="left:1383px;top:353px;width:24px;height:15px;line-height:15px;font-size:13.5px;font-weight:bold;color:#a6a6a6;letter-spacing:-0.4px;white-space:nowrap;text-shadow:0.6px 0 0 #a6a6a6,-0.6px 0 0 #a6a6a6,0 0.6px 0 #a6a6a6">abc</div>
<svg class="a" style="left:1389px;top:360px" width="18" height="14" viewBox="0 0 18 14"><path d="M1.5 6.5L4.5 5L6.5 8.5C8.5 5 11.5 2 15 0.5L16 3C12.5 5.5 9.5 9 7.5 12.5L5.5 12.8z" fill="#a6a6a6" stroke="#a6a6a6" stroke-width="1.5"/></svg>
<div class="tb d" style="left:1408px;top:357px"><b>反</b><b>审</b><b>核</b></div>
<div class="a" style="left:1394px;top:406px;width:15px;height:15px;background:#a6a6a6"></div>
<div class="tb d" style="left:1410px;top:406px"><b>批</b><b>准</b></div>
<svg class="a" style="left:1389px;top:454px" width="22" height="23" viewBox="0 0 22 23"><path d="M5 0H18L22 3.5V20H5z" fill="#a6a6a6"/><path d="M7 12.5L0.6 18.6A2 2 0 0 0 3.2 22.2L5 20H9z" fill="#a6a6a6"/></svg>
<div class="tb d" style="left:1414px;top:456px"><b>查</b><b>找</b></div>
<svg class="a" style="left:1392px;top:503px" width="17" height="20" viewBox="0 0 17 20"><path d="M0 0H9.5V9.5L7 7C5 8.5 4.5 10.5 5.5 13L3.5 14.5C0.5 11.5 0.8 6.5 3.5 3.5z" fill="#a6a6a6"/><path d="M17 20H7.5V10.5L10 13C12 11.5 12.5 9.5 11.5 7L13.5 5.5C16.5 8.5 16.2 13.5 13.5 16.5z" fill="#a6a6a6"/></svg>
<div class="tb d" style="left:1414px;top:505px"><b>刷</b><b>新</b></div>
<svg class="a" style="left:1393px;top:554px" width="17" height="16" viewBox="0 0 17 16"><path d="M0.5 6.5L9 2.5L16 5.5V11L7.5 15.5L0.5 12z" fill="#a6a6a6"/><path d="M5.5 3.5L11 0.2L15.5 2.2L10 5.6z" fill="#a6a6a6"/><path d="M1.5 6.8L7.5 9.6" stroke="#fff" stroke-width="0.9"/><path d="M11.5 1.6L14.5 3" stroke="#fff" stroke-width="0.9"/></svg>
<div class="tb d" style="left:1414px;top:555px"><b>打</b><b>印</b></div>
<svg class="a" style="left:1391px;top:602px" width="16" height="16" viewBox="0 0 16 16"><rect x="1" y="1" width="14" height="14" fill="#f4faf4" stroke="#2a7d36" stroke-width="2"/><rect x="2.5" y="2.5" width="11" height="11" fill="none" stroke="#dfeee0" stroke-width="1"/><path d="M3.8 3.8L12 12.2M12 3.8L3.8 12.2" stroke="#37953f" stroke-width="2.1"/><path d="M9 11.5H13.2V8" stroke="#2f8a3a" stroke-width="1" fill="none"/></svg>
<div class="tb" style="left:1411px;top:603px"><b>导</b><b>出</b></div>
<svg class="a" style="left:1393px;top:652px" width="16" height="16" viewBox="0 0 16 16"><rect x="1" y="1" width="14" height="14" fill="#f4faf4" stroke="#2a7d36" stroke-width="2"/><rect x="2.5" y="2.5" width="11" height="11" fill="none" stroke="#dfeee0" stroke-width="1"/><path d="M3.8 3.8L12 12.2M12 3.8L3.8 12.2" stroke="#37953f" stroke-width="2.1"/><path d="M9 11.5H13.2V8" stroke="#2f8a3a" stroke-width="1" fill="none"/></svg>
<div class="tb" style="left:1410px;top:653px"><b>导</b><b>入</b></div>
<svg class="a" style="left:1390px;top:700px" width="23" height="24" viewBox="0 0 23 24"><path d="M0.5 4L8.5 0L17.5 2.5V19.5L10 23.5L0.5 20z" fill="#a6a6a6"/><path d="M17 8.6C20.8 6.8 23 9.6 23 13.5V17.4H19.8V14C19.8 12.4 19 12 17 12.6z" fill="#a6a6a6"/></svg>
<div class="tb d" style="left:1414px;top:706px"><b>关</b><b>闭</b></div>
<svg class="a" style="left:1385px;top:795px" width="60" height="55" viewBox="0 0 60 55"><path d="M16.5 11.4C24 10 34 10.3 42.8 10.8" stroke="#222" stroke-width="4.4" stroke-linecap="round" fill="none"/><path d="M15 10L19.6 9.8L21.4 43.5L19.2 43.5z" fill="#222"/><path d="M18.5 47.5C27 45.2 36 46 45.5 47.6" stroke="#222" stroke-width="4.6" stroke-linecap="round" fill="none"/><path d="M45 25.5L45.2 47.5" stroke="#222" stroke-width="4.6" stroke-linecap="round" fill="none"/><path d="M34.6 19.2L38.4 24.6L52.4 12" stroke="#222" stroke-width="4.8" stroke-linecap="round" stroke-linejoin="round" fill="none"/><path d="M23.6 22.4C26.5 21.6 29.5 22 32 23.4" stroke="#333" stroke-width="3" fill="none"/><path d="M23.4 31.2C28 29.8 33 29.8 38.6 30.4" stroke="#333" stroke-width="2.8" fill="none"/><path d="M23.4 38C28 37 33 37.4 39 37.6" stroke="#333" stroke-width="2.8" fill="none"/></svg>
<svg class="a" style="left:1245px;top:833px" width="16" height="16" viewBox="0 0 16 16"><path d="M8 0.6C10.5 0 12.8 1.6 14 3.8C16 7 15.5 11.5 12.8 14C10.5 16 5.5 16.2 3 14.2C0 11.8 -0.2 7.5 1.8 4.6C3.2 2.6 5.5 1 8 0.6z" fill="#2bd04a"/><path d="M3.4 7.2L9.2 5.8L12 8L9.4 11.8L5.5 12.8L3.4 12.6z" fill="#f4fff6"/></svg>
<svg class="a" style="left:1456px;top:849px" width="10" height="10" viewBox="0 0 10 10"><rect x="8" y="0" width="2" height="2" fill="#b4b4c0"/><rect x="4" y="4" width="2" height="2" fill="#b4b4c0"/><rect x="8" y="4" width="2" height="2" fill="#b4b4c0"/><rect x="0" y="8" width="2" height="2" fill="#b4b4c0"/><rect x="4" y="8" width="2" height="2" fill="#b4b4c0"/><rect x="8" y="8" width="2" height="2" fill="#b4b4c0"/></svg>
<div class="a" style="left:926px;top:205px;width:379px;height:518px;border:3px solid #ea3a38"></div>
<div class="a" style="left:306px;top:146px;width:358px;height:237px;background:#f0f0f0;border:1px solid #6e6e6e"></div>
<div class="a" style="left:362px;top:203px;width:150px;height:23px;background:#fff;border:1px solid #adadad"><span class="t" style="left:4px;top:0;height:21px;line-height:23px">D0500013</span></div>
<div class="a" style="left:362px;top:232px;width:150px;height:23px;background:#fff;border:1px solid #adadad"><span class="t" style="left:4px;top:0;height:21px;line-height:23px">D0500014</span></div>
<div class="a" style="left:362px;top:263px;width:150px;height:23px;background:#fff;border:1px solid #adadad"><span class="t" style="left:4px;top:0;height:21px;line-height:23px">D0500015</span></div>
<div class="a" style="left:572px;top:208px;width:13px;height:13px;background:#fff;border:1px solid #333"></div>
<div class="t" style="left:587px;top:207px;height:16px;line-height:16px;font-size:12px"><b>选</b><b>择</b></div>
<div class="a" style="left:572px;top:238px;width:13px;height:13px;background:#fff;border:1px solid #333"></div>
<div class="t" style="left:587px;top:237px;height:16px;line-height:16px;font-size:12px"><b>选</b><b>择</b></div>
<div class="a" style="left:572px;top:265px;width:13px;height:13px;background:#fff;border:1px solid #333"></div>
<div class="t" style="left:587px;top:264px;height:16px;line-height:16px;font-size:12px"><b>选</b><b>择</b></div>
<div class="btn" style="left:389px;top:331px;width:82px;height:25px"><b>确</b><b>定</b></div>
<div class="btn" style="left:498px;top:331px;width:82px;height:25px"><b>取</b><b>消</b></div>
<svg class="a" style="left:620px;top:220px" width="130" height="45" viewBox="620 220 130 45"><path d="M628.2 252.9L642.5 242L644.3 245.8L742.2 227.9L717 235.4L690.6 243L646.9 252.1L646 256.7z" fill="#ee3034" fill-opacity="0.9"/></svg>
</body></html>
